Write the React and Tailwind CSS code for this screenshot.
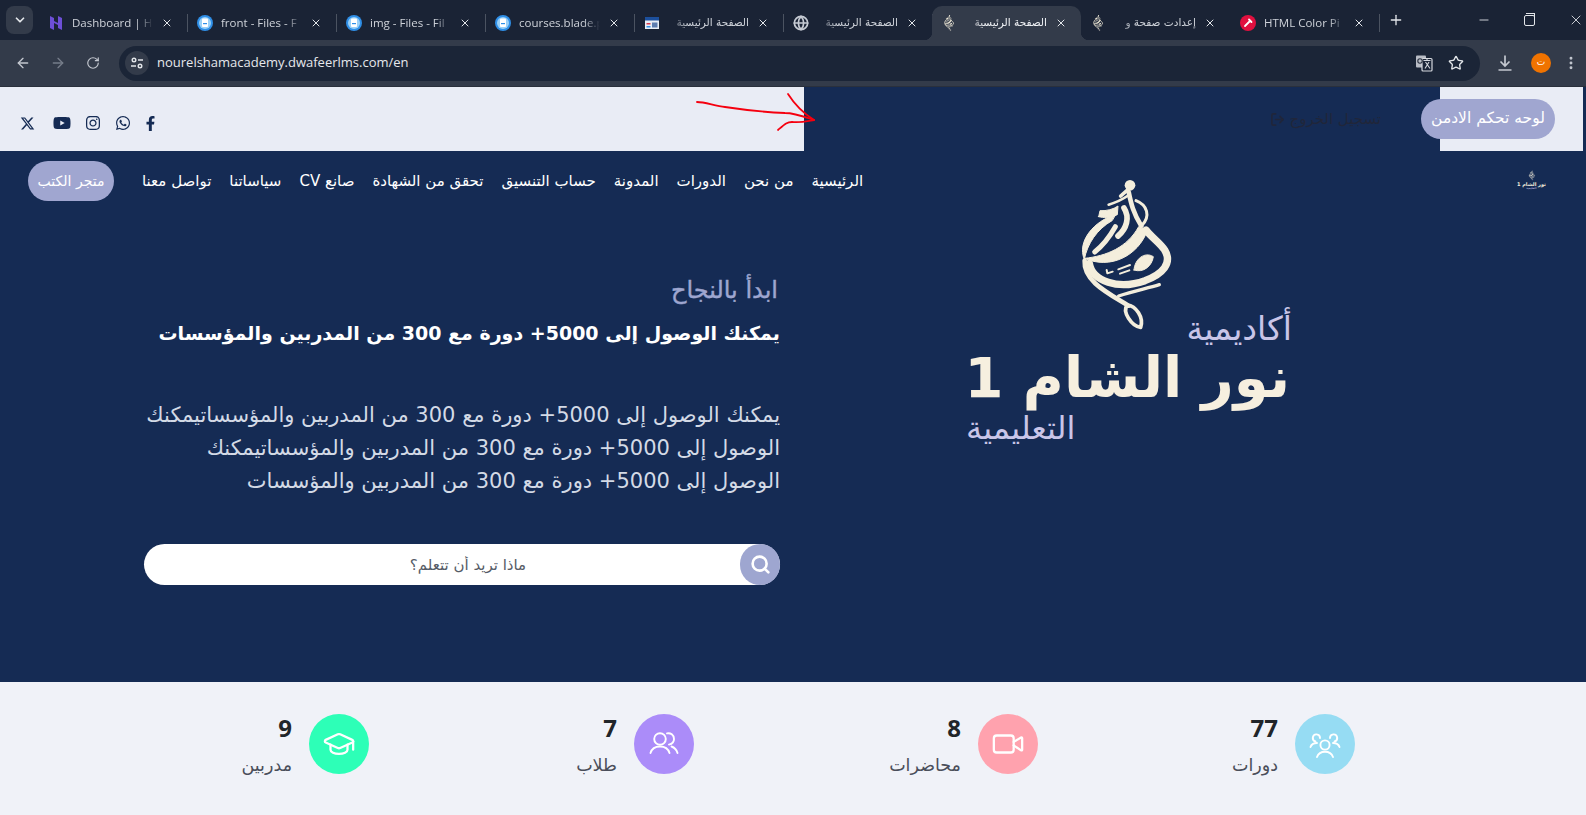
import React from "react";
import { GraduationCap, Video, ArrowLeft, ArrowRight, RotateCw, Star, EllipsisVertical, X, Plus, Minus, ChevronDown, Search, LogOut, Globe } from "lucide-react";
import { FaFacebookF, FaWhatsapp, FaInstagram, FaYoutube } from "react-icons/fa";
import { FaXTwitter } from "react-icons/fa6";

const ar = "font-['DejaVu_Sans','Noto_Sans',sans-serif]";
const ui = "font-['Open_Sans','Noto_Sans','DejaVu_Sans',sans-serif]";

function Emblem({ className }) {
  return (
    <svg viewBox="0 0 420 510" className={className} fill="none" stroke="#f4eedc" strokeLinecap="round" strokeLinejoin="round">
      <circle cx="240" cy="46" r="16" fill="#f4eedc" stroke="none" />
      <path d="M238 55 L212 78" strokeWidth="11" />
      <path d="M176 104 C195 98 215 90 232 78" strokeWidth="8" />
      <path d="M236 66 C243 100 250 130 274 168" strokeWidth="14" />
      <path d="M258 92 C292 105 302 138 276 166" strokeWidth="9" />
      <path d="M146 140 L150 122 C170 123 190 118 204 108 L202 134 C180 144 160 144 146 140 Z" fill="#f4eedc" strokeWidth="3" />
      <path d="M222 114 C240 142 230 176 204 198" strokeWidth="17" />
      <path d="M196 134 C132 152 80 215 103 268 C112 222 140 178 186 152 Z" fill="#f4eedc" strokeWidth="3" />
      <path d="M134 246 C154 230 176 205 196 170" strokeWidth="15" />
      <path d="M104 265 C170 258 232 232 266 170 L292 182 C264 258 180 300 104 265 Z" fill="#f4eedc" strokeWidth="3" />
      <path d="M118 280 C126 334 205 360 285 332 C338 312 368 280 344 240 C328 216 304 202 288 180" strokeWidth="22" />
      <path d="M104 272 C100 332 170 367 235 407" strokeWidth="14" />
      <path d="M206 378 C250 362 290 356 328 344" strokeWidth="10" />
      <path d="M252 300 C254 266 285 244 310 260 C306 288 280 310 252 300 Z" fill="#f4eedc" strokeWidth="3" />
      <path d="M205 298 L240 285 M210 311 L238 301" strokeWidth="6" />
      <path d="M170 300 L172 310 L188 305" strokeWidth="6" />
      <path d="M232 405 C215 425 245 468 272 472 C282 442 258 408 232 405 Z" strokeWidth="11" />
    </svg>
  );
}

function TabIcon({ kind }) {
  if (kind === "h")
    return (
      <svg viewBox="0 0 16 16" className="w-[16px] h-[16px] shrink-0">
        <path d="M2 1 L6 3 V6 L10 8 V1 L14 3 V15 L10 13 V10 L6 8 V15 L2 13 Z" fill="#6d4fd6" />
      </svg>
    );
  if (kind === "file")
    return (
      <svg viewBox="0 0 16 16" className="w-[16px] h-[16px] shrink-0">
        <circle cx="8" cy="8" r="8" fill="#2f8fe8" />
        <circle cx="8" cy="8" r="6" fill="#9ad0f7" />
        <rect x="5" y="3.5" width="6" height="8.5" rx="1" fill="#fff" />
        <rect x="6" y="8" width="4" height="1.2" fill="#2f8fe8" />
      </svg>
    );
  if (kind === "site")
    return (
      <svg viewBox="0 0 16 16" className="w-[16px] h-[16px] shrink-0">
        <rect x="1" y="2" width="14" height="12" fill="#e8eef6" />
        <rect x="1" y="2" width="14" height="3.5" fill="#1c4f9c" />
        <rect x="2.5" y="8" width="4" height="1.5" fill="#d9394b" />
        <rect x="2.5" y="11" width="4" height="1.5" fill="#2f8fe8" />
        <rect x="8" y="7.5" width="5.5" height="5" fill="#5d7db0" />
      </svg>
    );
  if (kind === "globe") return <Globe size={16} className="shrink-0 text-[#c5cad3]" strokeWidth={2.6} />;
  if (kind === "emblem") return <Emblem className="w-[15px] h-[18px] shrink-0 mx-[-1px]" />;
  return (
    <svg viewBox="0 0 16 16" className="w-[16px] h-[16px] shrink-0">
      <circle cx="8" cy="8" r="8" fill="#e0103f" />
      <path d="M5 11 L9.5 6.5 M9 4.5 L11.5 7" stroke="#fff" strokeWidth="1.8" strokeLinecap="round" />
    </svg>
  );
}

const tabs = [
  { icon: "h", title: "Dashboard | H" },
  { icon: "file", title: "front - Files - F" },
  { icon: "file", title: "img - Files - Fil" },
  { icon: "file", title: "courses.blade.p" },
  { icon: "site", title: "الصفحة الرئيسية", rtl: true },
  { icon: "globe", title: "الصفحة الرئيسية", rtl: true },
  { icon: "emblem", title: "الصفحة الرئيسية", rtl: true, active: true },
  { icon: "emblem", title: "إعدادت صفحة و", rtl: true, noSep: true },
  { icon: "picker", title: "HTML Color Pi" },
];

function Tab({ t }) {
  return (
    <div
      className={`relative flex items-center w-[149px] h-[34px] shrink-0 pl-[10px] pr-[14px] gap-[8px] ${
        t.active
          ? "bg-[#333b4a] rounded-t-[10px] before:content-[''] before:absolute before:bottom-0 before:left-[-8px] before:w-[8px] before:h-[8px] before:bg-[radial-gradient(circle_at_0_0,transparent_8px,#333b4a_8.5px)] after:content-[''] after:absolute after:bottom-0 after:right-[-8px] after:w-[8px] after:h-[8px] after:bg-[radial-gradient(circle_at_100%_0,transparent_8px,#333b4a_8.5px)]"
          : ""
      }`}
    >
      <TabIcon kind={t.icon} />
      <div
        dir={t.rtl ? "rtl" : "ltr"}
        className={`flex-1 min-w-0 whitespace-nowrap ${t.active ? "text-[#f1f3f6]" : "text-[#cfd3da]"} ${
          t.rtl
            ? ar + " text-[10.5px] [mask-image:linear-gradient(to_left,#000_75%,transparent)]"
            : ui + " text-[11.5px] [mask-image:linear-gradient(to_right,#000_80%,transparent)]"
        }`}
      >
        {t.title}
      </div>
      <X size={12} strokeWidth={2} className="shrink-0 text-[#e3e6ea]" />
      {!t.active && !t.noSep && <div className="absolute right-[-1px] top-[8px] w-px h-[18px] bg-[#4b5361]" />}
    </div>
  );
}

function BrowserChrome() {
  return (
    <div className="shrink-0">
      <div className="h-[40px] bg-[#1a2335] flex items-center pl-[6px]">
        <div className="w-[27px] h-[28px] rounded-[8px] bg-[#333b4a] flex items-center justify-center mr-[1px] mt-[-1px]">
          <ChevronDown size={14} strokeWidth={3} className="text-[#e3e6ea]" />
        </div>
        <div className="flex items-end h-[40px] pl-[4px]">
          {tabs.map((t, i) => (
            <Tab key={i} t={t} />
          ))}
        </div>
        <Plus size={16} strokeWidth={2} className="ml-[9px] text-[#e3e6ea]" />
        <div className="flex-1" />
        <div className="flex items-center gap-[33px] pr-[2px] text-[#e3e6ea]">
          <Minus size={14} strokeWidth={1.5} />
          <div className="relative w-[11px] h-[11px] border border-[#e3e6ea] rounded-[2px] before:content-[''] before:absolute before:left-[1px] before:top-[-3px] before:w-[9px] before:h-[9px] before:border-t before:border-r before:border-[#e3e6ea]" />
          <X size={16} strokeWidth={1.3} />
        </div>
      </div>
      <div className="h-[47px] bg-[#333b4a] border-b border-[#2a303c] flex items-center pl-[15px]">
        <ArrowLeft size={16} className="text-[#c4c8d0]" />
        <ArrowRight size={16} className="ml-[19px] text-[#767d8a]" />
        <RotateCw size={14} className="ml-[20px] text-[#c4c8d0]" />
        <div className="ml-[19px] w-[1361px] h-[35px] rounded-full bg-[#1b2537] flex items-center pl-[6px] pr-[16px]">
          <div className="w-[24px] h-[24px] rounded-full bg-[#333b4a] flex items-center justify-center">
            <svg viewBox="0 0 14 14" className="w-[14px] h-[14px]" fill="none" stroke="#e3e6ea" strokeWidth="1.4">
              <circle cx="4" cy="4" r="1.8" />
              <path d="M8 4 H13 M1 10 H6" />
              <circle cx="10" cy="10" r="1.8" />
            </svg>
          </div>
          <span className={`ml-[8px] text-[13px] text-[#e6e8ec] ${ui}`}>nourelshamacademy.dwafeerlms.com/en</span>
          <div className="flex-1" />
          <svg viewBox="0 0 18 18" className="w-[18px] h-[18px]">
            <rect x="1" y="1.5" width="10" height="12" rx="1" fill="#b9bdc6" />
            <rect x="7" y="4.5" width="10" height="12.5" rx="1" fill="#1b2537" stroke="#d5d8de" strokeWidth="1.2" />
            <path d="M8.5 6.5 H15.5 M12 5 V7 M10 14.5 L14 8 M10.5 8 L15 14.5" stroke="#d5d8de" strokeWidth="1.1" fill="none" />
            <circle cx="5" cy="7" r="2.2" fill="none" stroke="#2b3240" strokeWidth="1.1" />
          </svg>
          <Star size={16} className="ml-[15px] text-[#e3e6ea]" />
        </div>
        <svg viewBox="0 0 18 18" className="ml-[16px] w-[18px] h-[18px]" fill="none" stroke="#c4c8d0" strokeWidth="1.7">
          <path d="M9 1.5 V12 M4.5 7.5 L9 12 L13.5 7.5 M2.5 16 H15.5" />
        </svg>
        <div className={`ml-[17px] w-[20px] h-[20px] rounded-full bg-[#f07300] text-white text-[9px] flex items-center justify-center ${ar}`}>ت</div>
        <EllipsisVertical size={16} strokeWidth={2.4} className="ml-[12px] text-[#c4c8d0]" />
      </div>
    </div>
  );
}

function TopBar() {
  return (
    <div className="relative flex h-[64px] bg-[#152b54]">
      <div className="w-[804px] bg-[#e9ecf5] flex items-center pl-[20px] pt-[8px] text-[#152b54]">
        <FaXTwitter size={15} />
        <FaYoutube size={18} className="ml-[18px]" />
        <FaInstagram size={16} className="ml-[14px]" />
        <FaWhatsapp size={16} className="ml-[14px]" />
        <FaFacebookF size={15} className="ml-[12px]" />
      </div>
      <div className="flex-1 flex items-center justify-end pr-[59px]">
        <div className={`flex items-center gap-[4px] text-[15px] text-[#20263a] pt-[1px] ${ar}`}>
          <LogOut size={15} strokeWidth={2.6} />
          <span dir="rtl">تسجيل الخروج</span>
        </div>
      </div>
      <div className="w-[143px] bg-[#e9ecf5] flex items-center">
        <div dir="rtl" className={`ml-[-19px] w-[134px] h-[40px] rounded-[20px] bg-[#a0a6d0] text-white text-[15.5px] flex items-center justify-center whitespace-nowrap ${ar}`}>
          لوحه تحكم الادمن
        </div>
      </div>
      <div className="w-[3px]" />
      <svg className="absolute left-[690px] top-[0px] w-[130px] h-[50px]" viewBox="690 87 130 50" fill="none" stroke="#f5000f" strokeWidth="1.8" strokeLinecap="round" strokeLinejoin="round">
        <path d="M697 102 C705 102 715 106 725 107 C745 110 760 112 785 113 C795 113 805 117 814 120" />
        <path d="M788 94 C795 105 803 113 814 120" />
        <path d="M778 130 C785 124 787 122 792 122 C800 123 808 121 814 120" />
      </svg>
    </div>
  );
}

const menu = ["الرئيسية", "من نحن", "الدورات", "المدونة", "حساب التنسيق", "تحقق من الشهادة", "صانع CV", "سياساتنا", "تواصل معنا"];

function Nav() {
  return (
    <div className="relative z-10 flex items-center justify-between h-[60px] pl-[28px] pr-[40px]">
      <div dir="rtl" className={`flex items-center gap-[18px] text-white text-[15px] whitespace-nowrap ${ar}`}>
        {menu.map((m) => (
          <a key={m}>{m}</a>
        ))}
        <a className="mr-[10px] w-[86px] h-[40px] rounded-[20px] bg-[#a0a6d0] text-[14px] flex items-center justify-center">متجر الكتب</a>
      </div>
      <div className="flex flex-col items-center mt-[-2px]">
        <Emblem className="w-[9px] h-[11px]" />
        <span dir="rtl" className={`text-[5px] leading-[6px] font-bold text-[#f4eedc] ${ar}`}>نور الشام 1</span>
        <span dir="rtl" className={`text-[3px] leading-[3px] text-[#c9c5e8] ${ar}`}>التعليمية</span>
      </div>
    </div>
  );
}

function Hero() {
  return (
    <div className="flex h-[471px]">
      <div className="w-[793px] pr-[13px] flex flex-col items-end pt-[61px]">
        <div dir="rtl" className="w-[636px]">
          <h3 className={`text-[24px] leading-[36px] font-normal text-[#9ea6d0] pr-[2px] [-webkit-text-stroke:0.4px_#9ea6d0] ${ar}`}>ابدأ بالنجاح</h3>
          <h2 className={`mt-[7px] text-[19px] leading-[36px] font-bold text-white whitespace-nowrap ${ar}`}>
            يمكنك الوصول إلى 5000+ دورة مع 300 من المدربين والمؤسسات
          </h2>
          <p className={`mt-[48px] text-[21px] leading-[33px] text-[#d3dae6] whitespace-nowrap ${ar}`}>
            يمكنك الوصول إلى 5000+ دورة مع 300 من المدربين والمؤسساتيمكنك
            <br />
            الوصول إلى 5000+ دورة مع 300 من المدربين والمؤسساتيمكنك
            <br />
            الوصول إلى 5000+ دورة مع 300 من المدربين والمؤسسات
          </p>
          <div className="mt-[46px] h-[41px] rounded-full bg-white flex items-center">
            <div className="w-[40px] h-[41px] rounded-full bg-[#9ea6d0] flex items-center justify-center shrink-0">
              <Search size={21} strokeWidth={3} className="text-white" />
            </div>
            <input
              dir="rtl"
              placeholder="ماذا تريد أن تتعلم؟"
              className={`flex-1 min-w-0 h-full bg-transparent text-center text-[15px] pl-[52px] outline-none placeholder:text-[#555b66] ${ar}`}
            />
          </div>
        </div>
      </div>
      <div className="flex-1 pl-[167px]">
        <div className="w-[340px] mt-[-41px]">
          <Emblem className="ml-[90px] w-[140px] h-[170px]" />
          <div dir="rtl" className={`mt-[-30px] pr-[8px] text-[33px] leading-[38px] text-[#c9c5e8] ${ar}`}>أكاديمية</div>
          <div dir="rtl" className={`mt-[-3px] pr-[10px] text-[56px] leading-[66px] font-bold text-[#f6efdf] whitespace-nowrap ${ar}`}>نور الشام 1</div>
          <div className={`mt-[-2px] pl-[6px] text-[32px] leading-[38px] text-[#c9c5e8] ${ar}`} dir="ltr">
            <span dir="rtl">التعليمية</span>
          </div>
        </div>
      </div>
    </div>
  );
}

function UsersTwo() {
  return (
    <svg viewBox="0 0 32 32" className="w-[32px] h-[32px]" fill="none" stroke="#fff" strokeWidth="1.9" strokeLinecap="round">
      <circle cx="12" cy="11" r="5.8" />
      <path d="M2.5 25 C4 20 8 18.5 12 18.5 C16 18.5 20 20 21.5 25" />
      <path d="M19 5.4 C22.5 4.5 26 7 26 11 C26 14 24 16 21 16.6" />
      <path d="M23.5 18.5 C26.5 19.5 28.5 21.5 29.5 25" />
    </svg>
  );
}

function UsersThree() {
  return (
    <svg viewBox="0 0 32 32" className="w-[32px] h-[32px]" fill="none" stroke="#fff" strokeWidth="1.9" strokeLinecap="round">
      <circle cx="16" cy="17" r="4.6" />
      <path d="M8 29 C9.5 25 12.5 23.8 16 23.8 C19.5 23.8 22.5 25 24 29" />
      <path d="M11 10 A3.6 3.6 0 1 0 6.5 13.5" />
      <path d="M21 10 A3.6 3.6 0 1 1 25.5 13.5" />
      <path d="M1.5 19 C2.5 16 5 15 8 15 M30.5 19 C29.5 16 27 15 24 15" />
    </svg>
  );
}

const stats = [
  { n: "9", l: "مدربين", c: "bg-[#2dffb7]", i: <GraduationCap size={34} strokeWidth={1.6} className="text-white" /> },
  { n: "7", l: "طلاب", c: "bg-[#ab8cf9]", i: <UsersTwo /> },
  { n: "8", l: "محاضرات", c: "bg-[#ffa2ae]", i: <Video size={34} strokeWidth={1.6} className="text-white" /> },
  { n: "77", l: "دورات", c: "bg-[#96dcf3]", i: <UsersThree /> },
];

function Stats() {
  return (
    <div className="flex-1 bg-[#f0f2f8] grid grid-cols-[369px_325px_344px_317px] items-start pt-[32px]">
      {stats.map((s) => (
        <div key={s.n} className="flex justify-end items-start gap-[17px]">
          <div className="text-right">
            <div className="text-[24px] leading-[28px] font-bold text-[#212529] font-['Noto_Sans','DejaVu_Sans',sans-serif]">{s.n}</div>
            <div dir="rtl" className={`mt-[11px] text-[17.5px] leading-[24px] text-[#4a4e5a] ${ar}`}>{s.l}</div>
          </div>
          <div className={`w-[60px] h-[60px] rounded-full ${s.c} flex items-center justify-center`}>{s.i}</div>
        </div>
      ))}
    </div>
  );
}

export default function App() {
  return (
    <div className="w-[1586px] h-[815px] overflow-hidden flex flex-col bg-[#152b54]">
      <BrowserChrome />
      <TopBar />
      <Nav />
      <Hero />
      <Stats />
    </div>
  );
}
